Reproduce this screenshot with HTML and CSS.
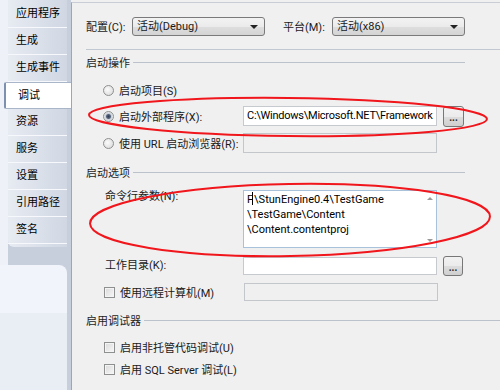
FILE: index.html
```html
<!DOCTYPE html>
<html lang="zh-CN">

<head>
    <meta charset="UTF-8" />
    <title>调试</title>
    <link rel="stylesheet" href="styles.css">
</head>

<body>
    <div class="window">
        <nav class="sidebar">
            <ul class="tabs">
                <li>应用程序</li>
                <li>生成</li>
                <li>生成事件</li>
                <li class="active">调试</li>
                <li>资源</li>
                <li>服务</li>
                <li>设置</li>
                <li>引用路径</li>
                <li>签名</li>
            </ul>
            <div class="sidebar-foot"></div>
        </nav>

        <main class="page">
            <div class="toolbar">
                <span class="config-label">配置(C):</span>
                <div class="select">活动(Debug)<span class="caret"></span></div>
                <span class="platform-label">平台(M):</span>
                <div class="select">活动(x86)<span class="caret"></span></div>
            </div>

            <div class="group-head"><span>启动操作</span><i class="rule"></i></div>

            <div class="opt opt-first">
                <span class="radio"></span>
                <span class="opt-label">启动项目(S)</span>
            </div>
            <div class="opt opt-mid">
                <span class="radio checked"></span>
                <span class="opt-label">启动外部程序(X):</span>
                <div class="field path">C:\Windows\Microsoft.NET\Framework</div>
                <button class="browse">...</button>
            </div>
            <div class="opt opt-last">
                <span class="radio"></span>
                <span class="opt-label">使用 URL 启动浏览器(R):</span>
                <div class="field disabled"></div>
            </div>

            <div class="group-head"><span>启动选项</span><i class="rule"></i></div>

            <div class="arg-row args">
                <span class="arg-label">命令行参数(N):</span>
                <div class="memo">
                    <div class="memo-text">F<i class="cursor"></i>\StunEngine0.4\TestGame<br>\TestGame\Content<br>\Content.contentproj</div>
                    <div class="memo-scroll"><i class="arrow-up"></i><i class="arrow-down"></i></div>
                </div>
            </div>
            <div class="arg-row workdir">
                <span class="arg-label">工作目录(K):</span>
                <div class="field short"></div>
                <button class="browse small">...</button>
            </div>
            <div class="opt remote">
                <span class="check"></span>
                <span class="opt-label">使用远程计算机(M)</span>
                <div class="field short disabled"></div>
            </div>

            <div class="group-head wide-head"><span>启用调试器</span><i class="rule"></i></div>

            <div class="opt check-row">
                <span class="check"></span>
                <span>启用非托管代码调试(U)</span>
            </div>
            <div class="opt check-row last-check">
                <span class="check"></span>
                <span>启用 SQL Server 调试(L)</span>
            </div>
        </main>

        <!-- red marks drawn over the screenshot -->
        <svg class="marks" width="500" height="390" viewBox="0 0 500 390">
            <ellipse cx="288" cy="117" rx="199" ry="19" transform="rotate(0.6 288 117)" />
            <ellipse cx="290" cy="220" rx="200" ry="36" transform="rotate(-1 290 220)" />
        </svg>
    </div>
</body>

</html>
```
FILE: styles.css
```css
* {
    box-sizing: border-box;
}

body {
    margin: 0;
    font-family: Roboto, "Noto Sans CJK SC", sans-serif;
    font-size: 11px;
    color: #1a1a1a;
    background: #f0f0f0;
}

.window {
    position: relative;
    display: flex;
    width: 500px;
    height: 390px;
    overflow: hidden;
}

/* left tab strip */
.sidebar {
    width: 71px;
    flex-shrink: 0;
    display: flex;
    flex-direction: column;
    background: linear-gradient(to right, #eef1f7 0, #eef1f7 8px, #c7cfdc 8px, #c7cfdc 100%);
}

.tabs {
    list-style: none;
    margin: 0 4px 0 8px;
    padding: 1px 0 0;
    background: linear-gradient(to right, #e7ebf2, #d0d7e3);
    border-bottom-left-radius: 6px;
    height: 247px;
}

.tabs li {
    height: 27px;
    line-height: 26px;
    padding-left: 8px;
    border-bottom: 1px solid #f6f8fb;
    font-size: 11px;
    color: #000;
}

.tabs li.active {
    margin-left: -4px;
    margin-right: -4px;
    padding-left: 12px;
    background: #fff;
    border: 1px solid #a9b6ca;
    border-left: 2px solid #7d90ae;
    border-right: none;
    border-radius: 2px 0 0 2px;
}

.sidebar-foot {
    flex: 1;
    margin-right: 4px;
    margin-top: 18px;
    background: linear-gradient(#f1f5fb 0, #f1f5fb 48px, #e9edf4 48px);
    border-top-right-radius: 8px;
}

/* main page */
.page {
    flex: 1;
    margin-top: 2px;
    padding-left: 14px;
    border-left: 1px solid #9ea6b4;
    border-top: 1px solid #c8cdd6;
}

.toolbar {
    display: flex;
    align-items: center;
    height: 47px;
    border-bottom: 1px solid #c2c8d2;
}

.config-label {
    width: 46px;
}

.platform-label {
    width: 49px;
    margin-left: 18px;
}

.select {
    position: relative;
    width: 133px;
    height: 19px;
    line-height: 17px;
    padding-left: 4px;
    border: 1px solid #7a7a7a;
    border-radius: 3px;
    background: linear-gradient(#f3f3f3, #ebebeb 50%, #dedede 51%, #d4d4d4);
}

.caret {
    position: absolute;
    right: 6px;
    top: 7px;
    border-left: 4px solid transparent;
    border-right: 4px solid transparent;
    border-top: 4px solid #222;
}

.group-head {
    display: flex;
    align-items: center;
    height: 24px;
    padding-right: 35px;
    color: #1e1e1e;
}

.group-head .rule {
    flex: 1;
    height: 1px;
    margin-left: 3px;
    background: #bcc2cc;
}

.wide-head {
    height: 36px;
    padding-right: 0;
}

.opt {
    display: flex;
    align-items: center;
    padding-left: 17px;
}

.opt-first {
    height: 32px;
}

.opt-mid {
    height: 20px;
}

.opt-last {
    height: 34px;
}

.opt-label {
    width: 124px;
    white-space: nowrap;
}

.radio {
    width: 11px;
    height: 11px;
    margin-right: 5px;
    border: 1px solid #8e8f8f;
    border-radius: 50%;
    background: radial-gradient(circle at 40% 40%, #fbfbfb, #d6d6d6);
}

.radio.checked {
    background: radial-gradient(circle, #2f3b4e 0, #56657c 2px, #c9cfd8 3px, #f2f2f2 5px);
}

.check {
    width: 11px;
    height: 11px;
    margin-right: 5px;
    border: 1px solid #8e8f8f;
    background: linear-gradient(135deg, #dadada, #f7f7f7);
    box-shadow: inset 0 0 0 1px #f4f4f4;
}

.field {
    width: 194px;
    height: 20px;
    padding-left: 4px;
    line-height: 18px;
    border: 1px solid #c6c9ce;
    background: #fff;
    white-space: nowrap;
    overflow: hidden;
    color: #000;
}

.field.path {
    padding-left: 3px;
    letter-spacing: -0.25px;
}

.field.short {
    height: 18px;
}

.field.disabled {
    background: #f0f0f0;
    border-color: #c3c6cb;
}

.browse {
    width: 21px;
    height: 21px;
    margin-left: 6px;
    padding: 4px 0 0;
    font-family: "Liberation Sans", sans-serif;
    font-size: 10px;
    font-weight: bold;
    line-height: 10px;
    color: #333;
    border: 1px solid #777;
    border-radius: 3px;
    background: linear-gradient(#f2f2f2, #ebebeb 50%, #dddddd 51%, #cfcfcf);
}

.browse.small {
    width: 20px;
    height: 20px;
}

.arg-row {
    display: flex;
    padding-left: 19px;
}

.arg-label {
    width: 138px;
    line-height: 14px;
}

.args {
    margin-top: 6px;
    height: 58px;
    align-items: flex-start;
}

.workdir {
    margin-top: 8px;
    height: 20px;
    align-items: center;
}

.remote {
    margin-top: 6px;
    height: 20px;
    padding-left: 18px;
}

.remote .opt-label {
    width: 124px;
}

.memo {
    display: flex;
    width: 194px;
    height: 58px;
    border: 1px solid #a9c2dc;
    background: #fff;
}

.memo-text {
    flex: 1;
    padding: 1px 0 0 3px;
    line-height: 15px;
    color: #000;
}

.cursor {
    display: inline-block;
    width: 1px;
    height: 13px;
    margin: 0 1px -2px -1px;
    background: #000;
}

.memo-scroll {
    width: 12px;
    display: flex;
    flex-direction: column;
    justify-content: space-between;
    align-items: center;
    padding: 6px 0 5px;
}

.arrow-up {
    border-left: 3px solid transparent;
    border-right: 3px solid transparent;
    border-bottom: 3px solid #9a9a9a;
}

.arrow-down {
    border-left: 3px solid transparent;
    border-right: 3px solid transparent;
    border-top: 3px solid #9a9a9a;
}

.check-row {
    height: 18px;
    padding-left: 18px;
}

.last-check {
    height: 26px;
}

.marks {
    position: absolute;
    left: 0;
    top: 0;
    pointer-events: none;
}

.marks ellipse {
    fill: none;
    stroke: #f0161c;
    stroke-width: 2;
}
```
